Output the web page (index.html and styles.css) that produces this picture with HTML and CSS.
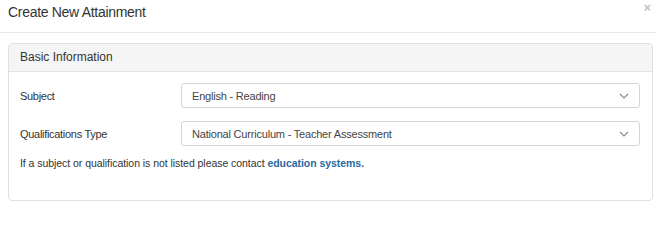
FILE: index.html
```html
<!DOCTYPE html>
<html lang="en">
<head>
<meta charset="utf-8">
<title>Create New Attainment</title>
<link rel="stylesheet" href="styles.css">
</head>
<body>
<div class="modal">
  <div class="modal-header">
    <h4 class="modal-title">Create New Attainment</h4>
    <span class="close">&times;</span>
  </div>
  <div class="modal-body">
    <div class="panel">
      <div class="panel-heading">Basic Information</div>
      <div class="panel-body">
        <div class="form-row">
          <label class="form-label">Subject</label>
          <div class="select">
            <span class="select-text">English - Reading</span>
            <svg class="chevron" width="10" height="6" viewBox="0 0 10 6"><path d="M1 1 L5 5 L9 1" fill="none" stroke="#8a8a8a" stroke-width="1.1"/></svg>
          </div>
        </div>
        <div class="form-row">
          <label class="form-label">Qualifications Type</label>
          <div class="select">
            <span class="select-text">National Curriculum - Teacher Assessment</span>
            <svg class="chevron" width="10" height="6" viewBox="0 0 10 6"><path d="M1 1 L5 5 L9 1" fill="none" stroke="#8a8a8a" stroke-width="1.1"/></svg>
          </div>
        </div>
        <p class="note">If a subject or qualification is not listed please contact <a class="link" href="#">education systems.</a></p>
      </div>
    </div>
  </div>
</div>
</body>
</html>
```
FILE: styles.css
```css
* { box-sizing: border-box; }
html, body { margin: 0; padding: 0; background: #fff; }
body {
  font-family: "Liberation Sans", Arial, sans-serif;
  color: #333;
  width: 656px;
  height: 206px;
  overflow: hidden;
}
.modal-header {
  height: 33px;
  border-bottom: 1px solid #e8e8e8;
  display: flex;
  justify-content: space-between;
  align-items: flex-start;
  padding: 4px 4px 0 8px;
}
.modal-title {
  margin: 0;
  font-size: 14px;
  font-weight: normal;
  line-height: 16px;
  letter-spacing: -0.3px;
  color: #333;
}
.close {
  font-size: 13px;
  font-weight: bold;
  line-height: 8px;
  color: #c4c4c4;
  margin-top: 0px;
  margin-right: 1px;
}
.modal-body {
  padding: 10px 3px 0 8px;
}
.panel {
  border: 1px solid #e0e0e0;
  border-radius: 4px;
  height: 158px;
  overflow: hidden;
}
.panel-heading {
  height: 28px;
  background: #f5f5f5;
  border-bottom: 1px solid #e3e3e3;
  padding: 0 11px;
  font-size: 12px;
  line-height: 27px;
  color: #333;
}
.panel-body {
  padding: 11px 12px 0 11px;
}
.form-row {
  display: grid;
  grid-template-columns: 161px 1fr;
  align-items: center;
  margin-bottom: 13px;
}
.form-label {
  font-size: 11px;
  letter-spacing: -0.3px;
  color: #333;
}
.select {
  height: 25px;
  border: 1px solid #d6d6d6;
  border-radius: 3px;
  display: flex;
  align-items: center;
  justify-content: space-between;
  padding: 0 10px 0 10px;
}
.select-text {
  font-size: 11px;
  letter-spacing: -0.2px;
  color: #444;
}
.chevron { display: block; }
.note {
  margin: -4px 0 0 0;
  font-size: 10.5px;
  letter-spacing: -0.05px;
  line-height: 16px;
  color: #333;
}
.link {
  color: #2b6a9f;
  font-weight: bold;
  text-decoration: none;
}
```
